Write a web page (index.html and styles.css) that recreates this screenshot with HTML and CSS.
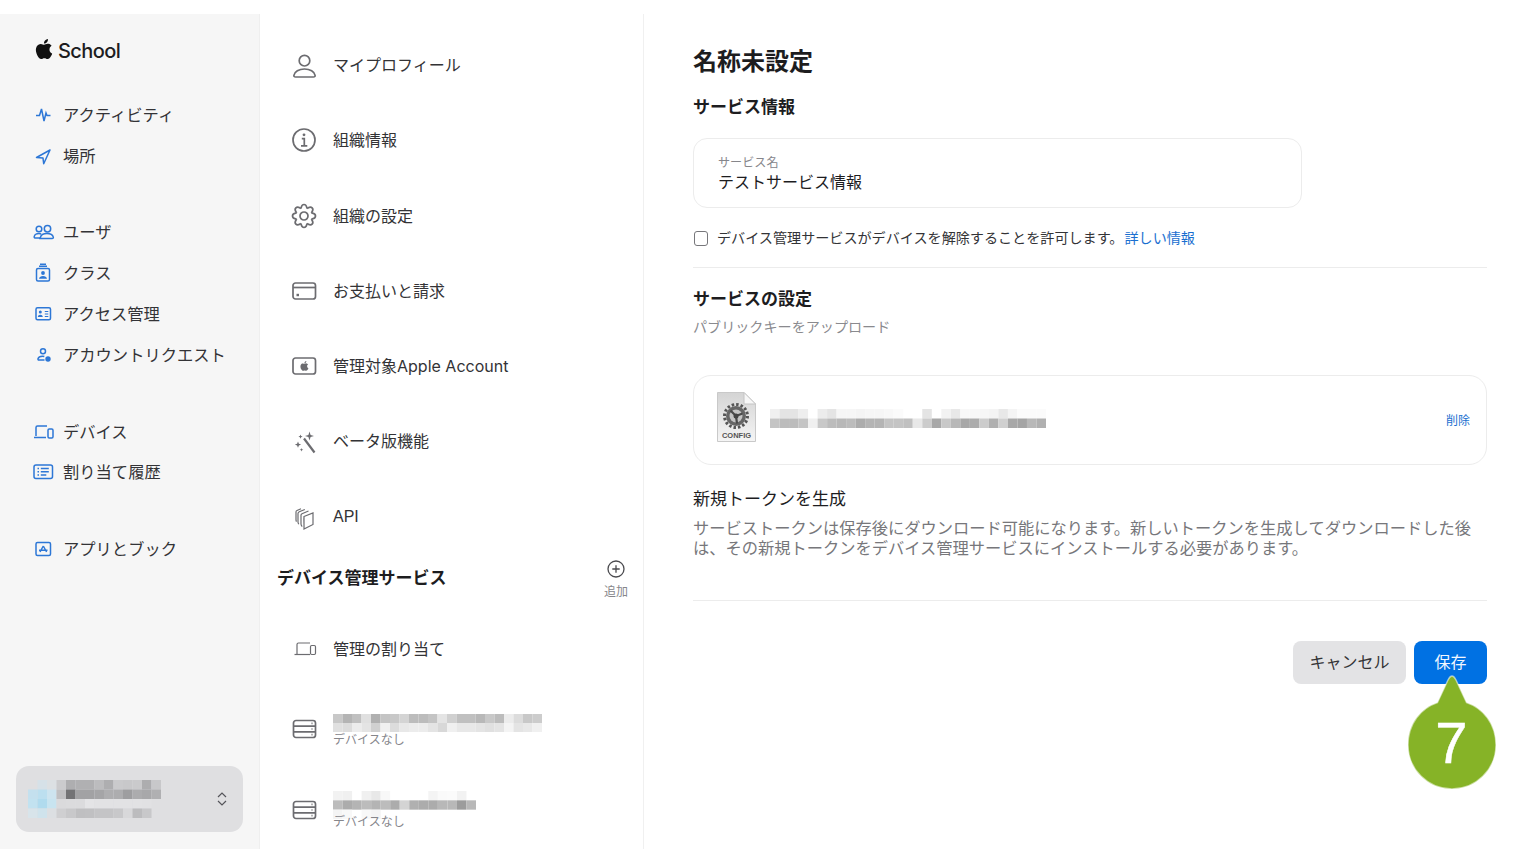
FILE: index.html
```html
<!DOCTYPE html>
<html lang="ja">
<head>
<meta charset="utf-8">
<title>Apple School Manager</title>
<link rel="stylesheet" href="styles.css">
</head>
<body>
<svg class="defs" width="0" height="0" aria-hidden="true">
  <defs>
    <path id="apple" d="M12.152 6.896c-.948 0-2.415-1.078-3.96-1.04-2.04.027-3.91 1.183-4.961 3.014-2.117 3.675-.546 9.103 1.519 12.09 1.013 1.454 2.208 3.09 3.792 3.039 1.52-.065 2.09-.987 3.935-.987 1.831 0 2.35.987 3.96.948 1.637-.026 2.676-1.48 3.676-2.948 1.156-1.688 1.636-3.325 1.662-3.415-.039-.013-3.182-1.221-3.22-4.857-.026-3.04 2.48-4.494 2.597-4.559-1.429-2.09-3.623-2.324-4.39-2.376-2-.156-3.675 1.09-4.61 1.09zM15.53 3.83c.843-1.012 1.4-2.427 1.245-3.83-1.207.052-2.662.805-3.532 1.818-.78.896-1.454 2.338-1.273 3.714 1.338.104 2.715-.688 3.559-1.701"/>
    <path id="lobe" d="M-3.06 -7.39C-2.6 -8.8 -2.8 -11.5 0 -11.5C2.8 -11.5 2.6 -8.8 3.06 -7.39"/>
    <g id="server">
      <rect x="4.5" y="6.5" width="22" height="17" rx="2.5"/>
      <path d="M4.5 12.2h22M4.5 17.8h22"/>
      <path class="dots" d="M22.5 9.3h1M22.5 15h1M22.5 20.7h1"/>
    </g>
  </defs>
</svg>

<div class="app">
  <aside class="sidebar">
    <div class="brand">
      <svg class="brand-logo" viewBox="0 0 24 24" width="20" height="20"><use href="#apple"/></svg>
      <span class="brand-name">School</span>
    </div>
    <nav class="side-nav">
      <div class="side-group">
        <a class="side-item">
          <svg class="side-icon" viewBox="0 0 30 24"><path d="M8 12.5h3.5l2-6.5 2.5 12 2-8 1 2.5h3.5"/></svg>
          <span>アクティビティ</span>
        </a>
        <a class="side-item">
          <svg class="side-icon" viewBox="0 0 30 24"><path d="M22 6 8.5 13.5l6.5.6.7 5.6z" stroke-linejoin="round"/></svg>
          <span>場所</span>
        </a>
      </div>
      <div class="side-group">
        <a class="side-item">
          <svg class="side-icon" viewBox="0 0 30 24"><circle cx="11" cy="9" r="2.8"/><circle cx="19.5" cy="8.7" r="3.2"/><path d="M12 18H7.6c-1 0-1.6-.6-1.4-1.4.5-1.9 2.3-3 4.8-3 .8 0 1.5.1 2.2.4"/><path d="M11.7 18.5h13c1 0 1.4-.6 1.2-1.4-.6-2.3-3-3.6-6.4-3.6s-5.8 1.3-6.4 3.6c-.2.8.2 1.4 1.2 1.4z" transform="translate(-.6 0)"/></svg>
          <span>ユーザ</span>
        </a>
        <a class="side-item">
          <svg class="side-icon" viewBox="0 0 30 24"><rect x="8.5" y="7.5" width="13" height="12.5" rx="1.5"/><path d="M11 5.300h8M12 3.300h6"/><circle class="fill" cx="15" cy="12" r="1.900"/><path class="fill" d="M11 17.800c.3-2 2-2.800 4-2.800s3.700.8 4 2.800z"/></svg>
          <span>クラス</span>
        </a>
        <a class="side-item">
          <svg class="side-icon" viewBox="0 0 30 24"><rect x="8" y="5.800" width="14.500" height="12" rx="1.500"/><circle class="fill" cx="12.300" cy="10" r="1.500"/><path class="fill" d="M9.800 15c.2-1.500 1.200-2.200 2.500-2.200s2.300.7 2.500 2.200z"/><path d="M16.800 9.500h3.500M16.800 12h3.500M16.800 14.500h3.500" stroke-width="1"/></svg>
          <span>アクセス管理</span>
        </a>
        <a class="side-item">
          <svg class="side-icon" viewBox="0 0 30 24"><circle cx="15" cy="8.300" r="2.500"/><path d="M11 17h5.500M11 17c-.8 0-1.200-.5-1-1.200.4-1.500 2.200-2.600 4.500-2.600.7 0 1.300.1 1.800.3"/><circle class="fill" cx="20" cy="16" r="2.700"/></svg>
          <span>アカウントリクエスト</span>
        </a>
      </div>
      <div class="side-group">
        <a class="side-item">
          <svg class="side-icon" viewBox="0 0 30 24"><path d="M19 6H9.500C8.700 6 8 6.700 8 7.500V16"/><path d="M6 17.500h12"/><rect x="20" y="9" width="5" height="9" rx="1.200"/></svg>
          <span>デバイス</span>
        </a>
        <a class="side-item">
          <svg class="side-icon" viewBox="0 0 30 24"><rect x="6" y="5" width="18.500" height="13.500" rx="2"/><path d="M9.500 8.500h1.500M9.500 11.700h1.500M9.500 15h1.500M12.800 8.500h8M12.800 11.700h8M12.800 15h5.500"/></svg>
          <span>割り当て履歴</span>
        </a>
      </div>
      <div class="side-group">
        <a class="side-item">
          <svg class="side-icon" viewBox="0 0 30 24"><rect x="8" y="5.500" width="14.500" height="13" rx="1.500"/><path d="M15.300 9l-3.300 6M15.300 9l3.300 6M11 13.300h8.500"/></svg>
          <span>アプリとブック</span>
        </a>
      </div>
    </nav>
    <div class="org-card">
      <svg class="mosaic org-mosaic" viewBox="0 0 14 4" width="133" height="38" preserveAspectRatio="none">
        <rect x="1" y="0" width="1" height="1" fill="#d6e1e8"/><rect x="2" y="0" width="1" height="1" fill="#dce0e3"/><rect x="3" y="0" width="1" height="1" fill="#cbcbcd"/><rect x="4" y="0" width="1" height="1" fill="#aeaeb0"/><rect x="5" y="0" width="1" height="1" fill="#b0b0b2"/><rect x="6" y="0" width="1" height="1" fill="#b0b0b2"/><rect x="7" y="0" width="1" height="1" fill="#bcbcbe"/><rect x="8" y="0" width="1" height="1" fill="#aeaeb0"/><rect x="9" y="0" width="1" height="1" fill="#cacacc"/><rect x="10" y="0" width="1" height="1" fill="#c8c8ca"/><rect x="11" y="0" width="1" height="1" fill="#cacacc"/><rect x="12" y="0" width="1" height="1" fill="#adadaf"/><rect x="13" y="0" width="1" height="1" fill="#c8c8ca"/>
        <rect x="0" y="1" width="1" height="1" fill="#c4e0ee"/><rect x="1" y="1" width="1" height="1" fill="#bcdfef"/><rect x="2" y="1" width="1" height="1" fill="#cde4ef"/><rect x="3" y="1" width="1" height="1" fill="#c0c0c2"/><rect x="4" y="1" width="1" height="1" fill="#737375"/><rect x="5" y="1" width="1" height="1" fill="#a2a2a4"/><rect x="6" y="1" width="1" height="1" fill="#a2a2a4"/><rect x="7" y="1" width="1" height="1" fill="#a5a5a7"/><rect x="8" y="1" width="1" height="1" fill="#aeaeb0"/><rect x="9" y="1" width="1" height="1" fill="#adadaf"/><rect x="10" y="1" width="1" height="1" fill="#9e9ea0"/><rect x="11" y="1" width="1" height="1" fill="#acacae"/><rect x="12" y="1" width="1" height="1" fill="#a8a8aa"/><rect x="13" y="1" width="1" height="1" fill="#b0b0b2"/>
        <rect x="0" y="2" width="1" height="1" fill="#c2e2f0"/><rect x="1" y="2" width="1" height="1" fill="#b0dbee"/><rect x="2" y="2" width="1" height="1" fill="#c8e4f0"/><rect x="3" y="2" width="1" height="1" fill="#dadadc"/><rect x="4" y="2" width="1" height="1" fill="#dbdbdd"/><rect x="5" y="2" width="1" height="1" fill="#dbdbdd"/><rect x="6" y="2" width="1" height="1" fill="#e4e4e6"/><rect x="7" y="2" width="1" height="1" fill="#e2e2e4"/><rect x="8" y="2" width="1" height="1" fill="#e2e2e4"/><rect x="9" y="2" width="1" height="1" fill="#e2e2e4"/><rect x="10" y="2" width="1" height="1" fill="#e2e2e4"/><rect x="11" y="2" width="1" height="1" fill="#e2e2e4"/><rect x="12" y="2" width="1" height="1" fill="#e1e1e3"/>
        <rect x="0" y="3" width="1" height="1" fill="#d8e4ea"/><rect x="1" y="3" width="1" height="1" fill="#cfe3ec"/><rect x="2" y="3" width="1" height="1" fill="#dcdfe2"/><rect x="3" y="3" width="1" height="1" fill="#cfcfd1"/><rect x="4" y="3" width="1" height="1" fill="#c8c8ca"/><rect x="5" y="3" width="1" height="1" fill="#bfbfc1"/><rect x="6" y="3" width="1" height="1" fill="#c0c0c2"/><rect x="7" y="3" width="1" height="1" fill="#c4c4c6"/><rect x="8" y="3" width="1" height="1" fill="#c4c4c6"/><rect x="9" y="3" width="1" height="1" fill="#c8c8ca"/><rect x="10" y="3" width="1" height="1" fill="#d8d8da"/><rect x="11" y="3" width="1" height="1" fill="#bcbcbe"/><rect x="12" y="3" width="1" height="1" fill="#c8c8ca"/>
      </svg>
      <svg class="chevrons" viewBox="0 0 12 18" width="12" height="18"><path d="M2 7l4-4 4 4M2 11l4 4 4-4"/></svg>
    </div>
  </aside>

  <section class="mid">
    <ul class="mid-list">
      <li class="mid-item">
        <svg class="mid-icon" viewBox="0 0 30 30"><circle cx="15.500" cy="10.700" r="5.300"/><path d="M6.500 27h18c1.200 0 1.800-.7 1.600-1.700-.7-3.600-5-6.300-10.600-6.300s-9.900 2.700-10.600 6.300c-.2 1 .4 1.700 1.600 1.700z"/></svg>
        <span>マイプロフィール</span>
      </li>
      <li class="mid-item">
        <svg class="mid-icon" viewBox="0 0 30 30"><circle cx="15" cy="15" r="11"/><circle class="fill" cx="15" cy="9.800" r="1.400"/><path d="M12.800 13.700h2.500v7M12 20.800h6.300"/></svg>
        <span>組織情報</span>
      </li>
      <li class="mid-item">
        <svg class="mid-icon" viewBox="0 0 30 30"><g transform="translate(15 15)"><use href="#lobe"/><use href="#lobe" transform="rotate(45)"/><use href="#lobe" transform="rotate(90)"/><use href="#lobe" transform="rotate(135)"/><use href="#lobe" transform="rotate(180)"/><use href="#lobe" transform="rotate(225)"/><use href="#lobe" transform="rotate(270)"/><use href="#lobe" transform="rotate(315)"/><circle r="4"/></g></svg>
        <span>組織の設定</span>
      </li>
      <li class="mid-item">
        <svg class="mid-icon" viewBox="0 0 30 30"><rect x="4" y="7" width="22.500" height="16" rx="2.500"/><path d="M4 11.500h22.500"/><path class="thick" d="M7.500 19h2.500"/></svg>
        <span>お支払いと請求</span>
      </li>
      <li class="mid-item">
        <svg class="mid-icon" viewBox="0 0 30 30"><rect x="4" y="7" width="22.500" height="16" rx="2.500"/><use class="fill" href="#apple" transform="translate(10.500 10) scale(.41)"/></svg>
        <span class="mixed">管理対象Apple Account</span>
      </li>
      <li class="mid-item">
        <svg class="mid-icon" viewBox="0 0 30 30"><path d="M15 12.500 25.500 26.500" stroke-width="2.200"/><path class="fill-only" d="M20.500 5.500l1.100 3.400 3.400 1.100-3.400 1.100-1.100 3.400-1.100-3.400-3.400-1.100 3.400-1.100zM9 15.500l.9 2.200 2.200.9-2.200.9-.9 2.200-.9-2.200-2.200-.9 2.200-.9zM11.500 8.500l.6 1.500 1.500.6-1.500.6-.6 1.500-.6-1.500-1.500-.6 1.500-.6zM12.500 22l.5 1.300 1.300.5-1.300.5-.5 1.300-.5-1.300-1.300-.5 1.300-.5z"/></svg>
        <span>ベータ版機能</span>
      </li>
      <li class="mid-item">
        <svg class="mid-icon thin" viewBox="0 0 30 30"><path d="M15 14.500 24 11v11.500l-9 4.500zM15 14.500c-.5 4 .3 8.500 0 12.500"/><path d="M19.500 9 13 11.700c-.8.400-1 .9-1 1.600v8.700c0 1 .4 1.800 1.200 2.600M15.800 7.500 10.300 9.800c-.8.400-1.300 1-1.300 1.800v8.400c0 .9.300 1.500.8 2.300M12 6.800 8 8.500c-.7.300-1 .8-1 1.500v7.800c0 .7.100 1.200.5 1.800"/></svg>
        <span class="latin">API</span>
      </li>
    </ul>
    <div class="svc-head">
      <h2 class="svc-title">デバイス管理サービス</h2>
      <div class="svc-add">
        <svg class="add-icon" viewBox="0 0 20 20" width="20" height="20"><circle cx="10" cy="10" r="8"/><path d="M10 6.300v7.400M6.300 10h7.400"/></svg>
        <span>追加</span>
      </div>
    </div>
    <ul class="svc-list">
      <li class="svc-assign">
        <svg class="mid-icon thin" viewBox="0 0 30 30"><path d="M21 9H9.500C8.700 9 8 9.700 8 10.500V20"/><path d="M5.500 20.500H21"/><rect x="21.500" y="11.500" width="5" height="9" rx="1.200"/></svg>
        <span>管理の割り当て</span>
      </li>
      <li class="svc-row">
        <svg class="mid-icon" viewBox="0 0 30 30"><use href="#server"/></svg>
        <div class="svc-text">
          <svg class="mosaic" viewBox="0 0 22 2" width="209" height="18" preserveAspectRatio="none">
            <rect x="0" y="0" width="1" height="1" fill="#c8c8c8"/><rect x="1" y="0" width="1" height="1" fill="#b4b4b4"/><rect x="2" y="0" width="1" height="1" fill="#c0c0c0"/><rect x="3" y="0" width="1" height="1" fill="#e0e0e0"/><rect x="4" y="0" width="1" height="1" fill="#b0b0b0"/><rect x="5" y="0" width="1" height="1" fill="#c4c4c4"/><rect x="6" y="0" width="1" height="1" fill="#c8c8c8"/><rect x="7" y="0" width="1" height="1" fill="#d4d4d4"/><rect x="8" y="0" width="1" height="1" fill="#bcbcbc"/><rect x="9" y="0" width="1" height="1" fill="#bcbcbc"/><rect x="10" y="0" width="1" height="1" fill="#c4c4c4"/><rect x="11" y="0" width="1" height="1" fill="#e4e4e4"/><rect x="12" y="0" width="1" height="1" fill="#d0d0d0"/><rect x="13" y="0" width="1" height="1" fill="#c0c0c0"/><rect x="14" y="0" width="1" height="1" fill="#c0c0c0"/><rect x="15" y="0" width="1" height="1" fill="#b8b8b8"/><rect x="16" y="0" width="1" height="1" fill="#c8c8c8"/><rect x="17" y="0" width="1" height="1" fill="#bcbcbc"/><rect x="18" y="0" width="1" height="1" fill="#ececec"/><rect x="19" y="0" width="1" height="1" fill="#dcdcdc"/><rect x="20" y="0" width="1" height="1" fill="#c8c8c8"/><rect x="21" y="0" width="1" height="1" fill="#cccccc"/>
            <rect x="0" y="1" width="1" height="1" fill="#e0e0e0"/><rect x="1" y="1" width="1" height="1" fill="#dcdcdc"/><rect x="2" y="1" width="1" height="1" fill="#ececec"/><rect x="3" y="1" width="1" height="1" fill="#e4e4e4"/><rect x="4" y="1" width="1" height="1" fill="#d0d0d0"/><rect x="5" y="1" width="1" height="1" fill="#f0f0f0"/><rect x="6" y="1" width="1" height="1" fill="#dcdcdc"/><rect x="7" y="1" width="1" height="1" fill="#e8e8e8"/><rect x="8" y="1" width="1" height="1" fill="#ececec"/><rect x="9" y="1" width="1" height="1" fill="#ececec"/><rect x="10" y="1" width="1" height="1" fill="#e4e4e4"/><rect x="11" y="1" width="1" height="1" fill="#d8d8d8"/><rect x="12" y="1" width="1" height="1" fill="#f0f0f0"/><rect x="13" y="1" width="1" height="1" fill="#e8e8e8"/><rect x="14" y="1" width="1" height="1" fill="#e8e8e8"/><rect x="15" y="1" width="1" height="1" fill="#e4e4e4"/><rect x="16" y="1" width="1" height="1" fill="#e0e0e0"/><rect x="17" y="1" width="1" height="1" fill="#e4e4e4"/><rect x="18" y="1" width="1" height="1" fill="#f4f4f4"/><rect x="19" y="1" width="1" height="1" fill="#e4e4e4"/><rect x="20" y="1" width="1" height="1" fill="#e8e8e8"/><rect x="21" y="1" width="1" height="1" fill="#f0f0f0"/>
          </svg>
          <span class="svc-sub">デバイスなし</span>
        </div>
      </li>
      <li class="svc-row svc-row-b">
        <svg class="mid-icon" viewBox="0 0 30 30"><use href="#server"/></svg>
        <div class="svc-text">
          <svg class="mosaic" viewBox="0 0 15 3" width="143" height="28" preserveAspectRatio="none">
            <rect x="0" y="0" width="1" height="1" fill="#f2f2f2"/><rect x="1" y="0" width="1" height="1" fill="#f0f0f0"/><rect x="3" y="0" width="1" height="1" fill="#f0f0f0"/><rect x="4" y="0" width="1" height="1" fill="#e8e8e8"/><rect x="5" y="0" width="1" height="1" fill="#f8f8f8"/><rect x="10" y="0" width="1" height="1" fill="#f4f4f4"/><rect x="11" y="0" width="1" height="1" fill="#fafafa"/><rect x="12" y="0" width="1" height="1" fill="#fbfbfb"/><rect x="13" y="0" width="1" height="1" fill="#f2f2f2"/>
            <rect x="0" y="1" width="1" height="1" fill="#bcbcbc"/><rect x="1" y="1" width="1" height="1" fill="#acacac"/><rect x="2" y="1" width="1" height="1" fill="#b4b4b4"/><rect x="3" y="1" width="1" height="1" fill="#bcbcbc"/><rect x="4" y="1" width="1" height="1" fill="#b4b4b4"/><rect x="5" y="1" width="1" height="1" fill="#bcbcbc"/><rect x="6" y="1" width="1" height="1" fill="#acacac"/><rect x="7" y="1" width="1" height="1" fill="#d4d4d4"/><rect x="8" y="1" width="1" height="1" fill="#b0b0b0"/><rect x="9" y="1" width="1" height="1" fill="#acacac"/><rect x="10" y="1" width="1" height="1" fill="#acacac"/><rect x="11" y="1" width="1" height="1" fill="#b8b8b8"/><rect x="12" y="1" width="1" height="1" fill="#b8b8b8"/><rect x="13" y="1" width="1" height="1" fill="#9c9c9c"/><rect x="14" y="1" width="1" height="1" fill="#b8b8b8"/>
            <rect x="0" y="2" width="1" height="1" fill="#f4f4f4"/><rect x="1" y="2" width="1" height="1" fill="#f8f8f8"/><rect x="3" y="2" width="1" height="1" fill="#f8f8f8"/><rect x="4" y="2" width="1" height="1" fill="#f4f4f4"/>
          </svg>
          <span class="svc-sub">デバイスなし</span>
        </div>
      </li>
    </ul>
  </section>

  <main class="main">
    <h1 class="title">名称未設定</h1>
    <h2 class="h2 h2-first">サービス情報</h2>
    <div class="field">
      <span class="field-label">サービス名</span>
      <span class="field-value">テストサービス情報</span>
    </div>
    <div class="check-row">
      <span class="checkbox"></span>
      <span class="check-text">デバイス管理サービスがデバイスを解除することを許可します。<a class="link">詳しい情報</a></span>
    </div>
    <hr class="rule rule-a">
    <h2 class="h2 h2-second">サービスの設定</h2>
    <p class="sub">パブリックキーをアップロード</p>
    <div class="file-box">
      <div class="doc">
        <svg class="doc-art" viewBox="0 0 39 50" width="39" height="50">
          <defs><linearGradient id="paper" x1="0" y1="0" x2="0" y2="1"><stop offset="0" stop-color="#d4d4d4"/><stop offset="1" stop-color="#f5f5f5"/></linearGradient></defs>
          <path d="M.5.5H27L38.500 12V49.500H.5z" fill="url(#paper)" stroke="#c9c9c9"/>
          <path d="M27 .5V12H38.500z" fill="#f7f7f7" stroke="#c4c4c4"/>
          <circle cx="19" cy="24" r="11.500" fill="none" stroke="#555" stroke-width="3" stroke-dasharray="2.500 2"/>
          <circle cx="19" cy="24" r="10" fill="#666"/>
          <circle cx="19" cy="24" r="6.500" fill="#c4c4c4"/>
          <path d="M19 24 13.500 18.500M19 24l6.500-2.500M19 24l1 7.500" stroke="#4a4a4a" stroke-width="2.200"/>
          <circle cx="19" cy="24" r="2.500" fill="#444"/>
        </svg>
        <span class="doc-label">CONFIG</span>
      </div>
      <svg class="mosaic file-mosaic" viewBox="0 0 29 2" width="276" height="19" preserveAspectRatio="none">
        <rect x="0" y="0" width="1" height="1" fill="#f0f0f0"/><rect x="1" y="0" width="1" height="1" fill="#e4e4e4"/><rect x="2" y="0" width="1" height="1" fill="#e4e4e4"/><rect x="3" y="0" width="1" height="1" fill="#eeeeee"/><rect x="5" y="0" width="1" height="1" fill="#ececec"/><rect x="6" y="0" width="1" height="1" fill="#e4e4e4"/><rect x="7" y="0" width="1" height="1" fill="#f6f6f6"/><rect x="8" y="0" width="1" height="1" fill="#f6f6f6"/><rect x="9" y="0" width="1" height="1" fill="#f4f4f4"/><rect x="10" y="0" width="1" height="1" fill="#f6f6f6"/><rect x="11" y="0" width="1" height="1" fill="#f6f6f6"/><rect x="12" y="0" width="1" height="1" fill="#f8f8f8"/><rect x="13" y="0" width="1" height="1" fill="#fbfbfb"/><rect x="16" y="0" width="1" height="1" fill="#e4e4e4"/><rect x="18" y="0" width="1" height="1" fill="#f2f2f2"/><rect x="19" y="0" width="1" height="1" fill="#e8e8e8"/><rect x="20" y="0" width="1" height="1" fill="#f8f8f8"/><rect x="21" y="0" width="1" height="1" fill="#f8f8f8"/><rect x="22" y="0" width="1" height="1" fill="#f6f6f6"/><rect x="23" y="0" width="1" height="1" fill="#f4f4f4"/><rect x="24" y="0" width="1" height="1" fill="#e8e8e8"/><rect x="25" y="0" width="1" height="1" fill="#f4f4f4"/><rect x="26" y="0" width="1" height="1" fill="#fbfbfb"/><rect x="27" y="0" width="1" height="1" fill="#fbfbfb"/><rect x="28" y="0" width="1" height="1" fill="#fbfbfb"/>
        <rect x="0" y="1" width="1" height="1" fill="#c4c4c4"/><rect x="1" y="1" width="1" height="1" fill="#bcbcbc"/><rect x="2" y="1" width="1" height="1" fill="#bcbcbc"/><rect x="3" y="1" width="1" height="1" fill="#c4c4c4"/><rect x="4" y="1" width="1" height="1" fill="#f0f0f0"/><rect x="5" y="1" width="1" height="1" fill="#c8c8c8"/><rect x="6" y="1" width="1" height="1" fill="#bcbcbc"/><rect x="7" y="1" width="1" height="1" fill="#b8b8b8"/><rect x="8" y="1" width="1" height="1" fill="#bcbcbc"/><rect x="9" y="1" width="1" height="1" fill="#acacac"/><rect x="10" y="1" width="1" height="1" fill="#b4b4b4"/><rect x="11" y="1" width="1" height="1" fill="#b4b4b4"/><rect x="12" y="1" width="1" height="1" fill="#c4c4c4"/><rect x="13" y="1" width="1" height="1" fill="#c4c4c4"/><rect x="14" y="1" width="1" height="1" fill="#c0c0c0"/><rect x="15" y="1" width="1" height="1" fill="#e8e8e8"/><rect x="16" y="1" width="1" height="1" fill="#cccccc"/><rect x="17" y="1" width="1" height="1" fill="#a8a8a8"/><rect x="18" y="1" width="1" height="1" fill="#c8c8c8"/><rect x="19" y="1" width="1" height="1" fill="#b8b8b8"/><rect x="20" y="1" width="1" height="1" fill="#a8a8a8"/><rect x="21" y="1" width="1" height="1" fill="#acacac"/><rect x="22" y="1" width="1" height="1" fill="#cccccc"/><rect x="23" y="1" width="1" height="1" fill="#b0b0b0"/><rect x="24" y="1" width="1" height="1" fill="#d0d0d0"/><rect x="25" y="1" width="1" height="1" fill="#a8a8a8"/><rect x="26" y="1" width="1" height="1" fill="#a4a4a4"/><rect x="27" y="1" width="1" height="1" fill="#b8b8b8"/><rect x="28" y="1" width="1" height="1" fill="#b0b0b0"/>
      </svg>
      <a class="del">削除</a>
    </div>
    <h3 class="token-title">新規トークンを生成</h3>
    <p class="token-desc">サービストークンは保存後にダウンロード可能になります。新しいトークンを生成してダウンロードした後は、その新規トークンをデバイス管理サービスにインストールする必要があります。</p>
    <hr class="rule rule-b">
    <div class="actions">
      <button class="btn btn-cancel" type="button">キャンセル</button>
      <button class="btn btn-save" type="button">保存</button>
    </div>
  </main>
</div>

<div class="pin">
  <svg class="pin-shape" viewBox="0 0 90 118" width="90" height="118"><path d="M45 3c2 0 3 2 4 4l10.500 22.500C76 35 89 50.500 89 72c0 24.300-19.700 44-44 44S1 96.300 1 72c0-21.500 13-37 29.500-42.500L41 7c1-2 2-4 4-4z" fill="#86b327" stroke="#fff" stroke-opacity=".55" stroke-width="1.500"/></svg>
  <span class="pin-num">7</span>
</div>
</body>
</html>
```

FILE: styles.css
```css
* { box-sizing: border-box; }
html, body { margin: 0; padding: 0; }
body {
  width: 1536px;
  height: 864px;
  overflow: hidden;
  padding: 14px 0 15px;
  background: #fff;
  color: #333336;
  font-family: "Noto Sans CJK JP", "Noto Sans", sans-serif;
  font-size: 16px;
  position: relative;
}
.defs { position: absolute; }
ul { list-style: none; margin: 0; padding: 0; }
h1, h2, h3, p { margin: 0; }

.app { display: flex; height: 835px; }

/* sidebar */
.sidebar {
  width: 260px;
  flex: none;
  display: flex;
  flex-direction: column;
  background: #f6f6f6;
  border-right: 1px solid #efefef;
  padding: 0 16px 17px 0;
}
.brand {
  display: flex;
  align-items: center;
  height: 30px;
  margin: 22px 0 0 34px;
}
.brand-logo { fill: #111; margin-top: -4px; }
.brand-name {
  margin-left: 4px;
  font-family: Inter, "Liberation Sans", sans-serif;
  font-size: 20px;
  font-weight: 500;
  letter-spacing: -.6px;
  color: #1d1d1f;
}
.side-nav { margin: 28.5px 0 0 28px; display: flex; flex-direction: column; gap: 36px; }
.side-item {
  display: flex;
  align-items: center;
  gap: 5px;
  height: 40.8px;
  line-height: 24px;
  white-space: nowrap;
  font-size: 16.3px;
}
.side-item span { margin-top: -2px; }
.side-icon {
  width: 30px;
  height: 24px;
  flex: none;
  fill: none;
  stroke: #2d77d6;
  stroke-width: 1.5;
}
.side-icon .fill { fill: #2d77d6; stroke: none; }
.org-card {
  margin: auto 0 0 16px;
  height: 66px;
  background: #dfdfe1;
  border-radius: 13px;
  display: flex;
  align-items: center;
  padding: 0 15px 0 12px;
  justify-content: space-between;
}
.mosaic { display: block; filter: blur(.7px); }
.chevrons { fill: none; stroke: #55555a; stroke-width: 1.2; }

/* middle */
.mid {
  width: 384px;
  flex: none;
  border-right: 1px solid #f0f0f0;
  padding-top: 13.4px;
}
.mid-item {
  display: flex;
  align-items: center;
  gap: 14px;
  height: 75.25px;
  padding-left: 29px;
  line-height: 24px;
}
.mid-item span { margin-top: -2px; }
.mid-item span.latin { margin-top: 1px; font-family: "Liberation Sans", sans-serif; }
.mid-item span.mixed { margin-top: 0; font-family: Inter, "Noto Sans CJK JP", sans-serif; }
.mid-icon {
  width: 30px;
  height: 30px;
  flex: none;
  fill: none;
  stroke: #6c6c70;
  stroke-width: 1.7;
}
.mid-icon.thin { stroke-width: 1.2; }
.mid-icon .fill { fill: #6c6c70; stroke: none; }
.mid-icon .fill-only { fill: #6c6c70; stroke: none; }
.mid-icon .thick { stroke-width: 2.4; }
.mid-icon .dots { stroke-width: 1.5; }
.svc-head {
  display: flex;
  justify-content: space-between;
  align-items: center;
  height: 48px;
  margin-top: -.8px;
  padding: 0 15px 0 17px;
}
.svc-title { font-size: 17px; font-weight: 700; line-height: 24px; color: #1d1d1f; }
.svc-add {
  display: flex;
  flex-direction: column;
  align-items: center;
  font-size: 12px;
  line-height: 16px;
  color: #86868b;
  margin-top: 3px;
}
.add-icon { fill: none; stroke: #4a4a4e; stroke-width: 1.3; display: block; margin-bottom: 4px; }
.svc-assign {
  display: flex;
  align-items: center;
  gap: 14px;
  height: 46px;
  margin-top: 25px;
  padding-left: 29px;
  line-height: 24px;
}
.svc-assign span { margin-top: -2px; }
.svc-row {
  display: flex;
  align-items: center;
  gap: 14px;
  margin-top: 42px;
  padding-left: 29px;
}
.svc-row .mid-icon { margin-top: -4px; }
.svc-row .svc-sub { margin-top: -1px; }
.svc-row-b { margin-top: 43.6px; }
.svc-row-b .mid-icon { margin-top: 0; }
.svc-row-b .svc-sub { margin-top: -6px; }
.svc-text { display: flex; flex-direction: column; }
.svc-sub { position: relative; font-size: 12px; line-height: 16px; color: #86868b; }

/* main */
.main { flex: 1; padding: 31px 49px 0; min-width: 0; }
.title { font-size: 24px; line-height: 30px; font-weight: 700; color: #1d1d1f; margin-top: -.5px; }
.h2 { font-size: 17px; line-height: 24px; font-weight: 700; color: #1d1d1f; }
.h2-first { margin-top: 19.5px; }
.h2-second { margin-top: 18px; }
.field {
  width: 609px;
  height: 70px;
  margin-top: 20px;
  border: 1px solid #ececec;
  border-radius: 14px;
  padding-left: 24px;
  display: flex;
  flex-direction: column;
  justify-content: center;
}
.field-label { font-size: 12.100px; line-height: 16px; color: #86868b; }
.field-value { font-size: 16px; line-height: 22px; color: #1d1d1f; }
.check-row {
  display: flex;
  align-items: center;
  gap: 9px;
  margin-top: 20px;
  height: 20px;
  font-size: 14.100px;
  line-height: 20px;
  padding-left: 1px;
  white-space: nowrap;
}
.check-text { margin-top: -2px; }
.checkbox {
  width: 14px;
  height: 15px;
  border: 1.500px solid #77777b;
  border-radius: 3px;
  flex: none;
}
.link { color: #1a6fd0; margin-left: 1px; }
.rule { border: 0; height: 1px; background: #ececec; margin: 0; }
.rule-a { margin-top: 19px; }
.sub { margin-top: 6px; font-size: 14.100px; line-height: 20px; color: #8a8a8e; }
.file-box {
  margin-top: 39px;
  height: 90px;
  border: 1px solid #ececec;
  border-radius: 18px;
  display: flex;
  align-items: center;
  padding: 0 16px 0 23px;
}
.doc { position: relative; width: 39px; height: 50px; flex: none; margin-top: -6px; }
.doc-art { display: block; }
.doc-label {
  position: absolute;
  left: 0;
  right: 0;
  bottom: 1px;
  text-align: center;
  font-family: "Liberation Sans", sans-serif;
  font-size: 7.500px;
  line-height: 10px;
  font-weight: 700;
  color: #555;
}
.file-mosaic { margin: -4px 0 0 14px; }
.del { margin-left: auto; font-size: 12px; line-height: 16px; color: #1a6fd0; }
.token-title { margin-top: 20.5px; font-size: 17px; line-height: 24px; font-weight: 400; color: #1d1d1f; }
.token-desc { margin-top: 7.500px; font-size: 16.250px; line-height: 20px; color: #77777b; }
.rule-b { margin-top: 43px; }
.actions { display: flex; justify-content: flex-end; gap: 8px; margin-top: 40px; }
.btn {
  height: 43px;
  border: 0;
  border-radius: 8px;
  font-family: inherit;
  font-size: 16px;
  padding: 0 0 3px;
}
.btn-cancel { width: 113px; background: #e3e3e5; color: #333336; }
.btn-save { width: 73px; background: #0071e3; color: #f2f7ff; }

/* callout pin */
.pin { position: absolute; left: 1406.500px; top: 673px; width: 90px; height: 118px; }
.pin-shape { display: block; }
.pin-num {
  position: absolute;
  left: 0;
  right: 0;
  top: 34px;
  text-align: center;
  font-family: "Liberation Sans", sans-serif;
  font-size: 58px;
  line-height: 72px;
  color: #fff;
  -webkit-text-stroke: .5px #fff;
}
```
